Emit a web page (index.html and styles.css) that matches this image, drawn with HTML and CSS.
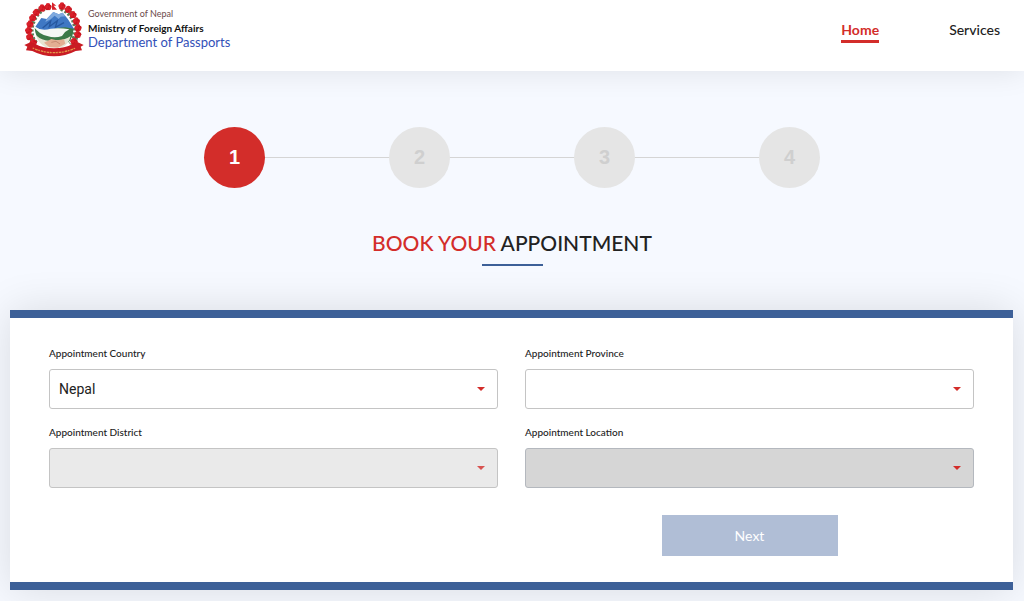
FILE: index.html
```html
<!DOCTYPE html>
<html lang="en">
<head>
	<meta charset="utf-8">
	<meta name="viewport" content="width=device-width, initial-scale=1">
	<title>Department of Passports</title>
	<link rel="stylesheet" href="styles.css">
</head>
<body>
	<header class="header">
		<a href="#" class="brand">
			<svg class="emblem" viewBox="24 6 180 165" aria-hidden="true">
				<defs>
					<g id="flower">
						<circle cx="0" cy="-4" r="7" fill="#d8202a"/>
						<circle cx="5" cy="0" r="6" fill="#c9151f"/>
						<circle cx="3" cy="5" r="6" fill="#d8202a"/>
						<circle cx="-3" cy="5" r="6" fill="#c9151f"/>
						<circle cx="-5" cy="0" r="6" fill="#d8202a"/>
					</g>
				</defs>
				<path d="M84 24Q50 44 44 86Q42 116 62 134M136 24Q176 40 180 86Q182 116 164 134" fill="none" stroke="#5b7d55" stroke-width="18" stroke-dasharray="7 6"/>
				<path d="M58 80L76 54L92 57L112 36L128 43L140 38L156 58L174 86L152 92L130 88L108 96L78 92Z" fill="#3f78c4"/>
				<path d="M112 36L128 43L140 38L148 49L134 50L128 57L116 47L104 58L88 66L92 57Z" fill="#7fa9de"/>
				<path d="M80 84L104 63L100 80L124 62L118 82L144 68" fill="none" stroke="#27589f" stroke-width="4"/>
				<path d="M56 84Q78 98 100 92Q124 82 148 82L172 86Q172 112 158 126L72 124Q58 108 56 84Z" fill="#3c7a48"/>
				<path d="M54 80Q78 94 104 86Q130 82 160 88Q146 94 138 108Q116 116 94 108Q68 102 54 80Z" fill="#f5f8f4"/>
				<path d="M60 106Q84 128 114 120Q146 123 164 108Q158 134 138 142H90Q68 132 60 106Z" fill="#e6e5d2"/>
				<path d="M84 128L106 117L122 121L144 118L148 131L126 143L100 142Z" fill="#e3af93"/>
				<path d="M106 127L120 124L132 132" fill="none" stroke="#b87962" stroke-width="2"/>
				<use href="#flower" x="96" y="20"/>
				<use href="#flower" x="78" y="24"/>
				<use href="#flower" x="61" y="37"/>
				<use href="#flower" x="50" y="53"/>
				<use href="#flower" x="42" y="72"/>
				<use href="#flower" x="38" y="91"/>
				<use href="#flower" x="41" y="110"/>
				<use href="#flower" x="52" y="127"/>
				<use href="#flower" x="138" y="18"/>
				<use href="#flower" x="157" y="28"/>
				<use href="#flower" x="171" y="44"/>
				<use href="#flower" x="181" y="63"/>
				<use href="#flower" x="186" y="83"/>
				<use href="#flower" x="185" y="103"/>
				<use href="#flower" x="174" y="124"/>
				<path d="M108 7L121 17H113L123 29H108Z" fill="#d8202a"/>
				<path d="M25 135L45 126L58 132Q82 145 114 145Q146 145 170 132L184 126L203 135L194 140L198 151L179 153Q148 169 114 169Q80 169 49 153L30 151L34 140Z" fill="#c91c24"/>
				<path d="M50 144Q80 158 114 158Q148 158 179 144" fill="none" stroke="#e39a4a" stroke-width="4" stroke-dasharray="5 3 8 2"/>
			</svg>
			<span class="brand-text">
				<span class="gov">Government of Nepal</span>
				<span class="ministry">Ministry of Foreign Affairs</span>
				<span class="department">Department of Passports</span>
			</span>
		</a>
		<nav class="nav">
			<a href="#" class="active">Home</a>
			<a href="#">Services</a>
		</nav>
	</header>

	<main>
		<ol class="steps">
			<li class="step current">1</li>
			<li class="step">2</li>
			<li class="step">3</li>
			<li class="step">4</li>
		</ol>

		<h1 class="title"><span>BOOK YOUR</span> APPOINTMENT</h1>

		<form class="card">
			<div class="field">
				<label for="country">Appointment Country</label>
				<div class="select">
					<select id="country">
						<option>Nepal</option>
					</select>
				</div>
			</div>
			<div class="field">
				<label for="province">Appointment Province</label>
				<div class="select">
					<select id="province">
						<option></option>
					</select>
				</div>
			</div>
			<div class="field">
				<label for="district">Appointment District</label>
				<div class="select faded">
					<select id="district" disabled>
						<option></option>
					</select>
				</div>
			</div>
			<div class="field">
				<label for="location">Appointment Location</label>
				<div class="select dark">
					<select id="location" disabled>
						<option></option>
					</select>
				</div>
			</div>
			<button type="submit" class="next" disabled>Next</button>
		</form>
	</main>
</body>
</html>
```
FILE: styles.css
```css
* {
	box-sizing: border-box;
}

body {
	margin: 0;
	background: #f6f9ff;
	color: #222;
	font-family: Lato, sans-serif;
}

a {
	color: inherit;
	text-decoration: none;
}

.header {
	display: flex;
	justify-content: space-between;
	align-items: flex-start;
	height: 71px;
	padding: 2px 24px 0;
	background: #fff;
	box-shadow: 0 0 30px rgba(0, 0, 0, 0.1);
}

.brand {
	display: flex;
	gap: 4px;
}

.emblem {
	width: 60px;
	height: 55px;
}

.brand-text {
	display: flex;
	flex-direction: column;
	padding-top: 5px;
	line-height: 14px;
	white-space: nowrap;
}

.gov {
	color: #6b4a4a;
	font-size: 9px;
}

.ministry {
	color: #111;
	font-size: 10px;
	font-weight: bold;
}

.department {
	color: #3350b8;
	font-size: 13px;
}

.nav {
	display: flex;
	gap: 70px;
	padding-top: 18px;
	font-size: 14px;
	font-weight: 500;
	line-height: 20px;
}

.nav .active {
	border-bottom: 3px solid #d32d2a;
	color: #d32d2a;
	font-weight: bold;
}

.steps {
	display: flex;
	justify-content: space-between;
	max-width: 616px;
	margin: 56px auto 0;
	padding: 0;
	list-style: none;
	background: linear-gradient(#d5d5d5, #d5d5d5) center / 100% 1px no-repeat;
}

.step {
	width: 61px;
	height: 61px;
	border-radius: 50%;
	background: #e5e5e5;
	color: #cfcfcf;
	font-family: "Liberation Sans", sans-serif;
	font-size: 20px;
	font-weight: bold;
	line-height: 61px;
	text-align: center;
}

.step.current {
	background: #d32d2a;
	color: #fff;
}

.title {
	margin: 42px 0 0;
	font-size: 21px;
	font-weight: 500;
	line-height: 26px;
	text-align: center;
}

.title span {
	color: #d32d2a;
}

.title::after {
	content: "";
	display: block;
	width: 61px;
	height: 2px;
	margin: 8px auto 0;
	background: #3d6098;
}

.card {
	display: grid;
	grid-template-columns: 1fr 1fr;
	column-gap: 27px;
	margin: 44px 11px 24px 10px;
	padding: 27px 39px 26px;
	border-top: 8px solid #3d6098;
	border-bottom: 8px solid #3d6098;
	background: #fff;
	box-shadow: 0 0 40px rgba(0, 0, 0, 0.12);
}

.field {
	margin-bottom: 15px;
}

.field label {
	display: block;
	margin-bottom: 8px;
	font-size: 10px;
	font-weight: 500;
	line-height: 16px;
}

.select {
	position: relative;
}

.select::after {
	content: "";
	position: absolute;
	top: 18px;
	right: 13px;
	border: 4px solid transparent;
	border-top-color: #d32d2a;
	border-bottom: 0;
}

.select.faded::after {
	opacity: 0.8;
}

.select select {
	display: block;
	width: 100%;
	height: 40px;
	padding: 0 9px;
	appearance: none;
	border: 1px solid #c4c4c4;
	border-radius: 3px;
	background: #fff;
	color: #222;
	font-family: Roboto, sans-serif;
	font-size: 14px;
	opacity: 1;
}

.select.faded select {
	background: #eaeaea;
}

.select.dark select {
	border-color: #b4b8be;
	background: #d6d6d6;
}

.next {
	grid-column: 2;
	justify-self: center;
	width: 176px;
	height: 41px;
	margin-top: 12px;
	border: 0;
	background: #b0bed6;
	color: #fff;
	font-family: inherit;
	font-size: 14px;
}

@media (max-width: 620px) {
	.card {
		grid-template-columns: 1fr;
	}

	.next {
		grid-column: 1;
	}
}
```
